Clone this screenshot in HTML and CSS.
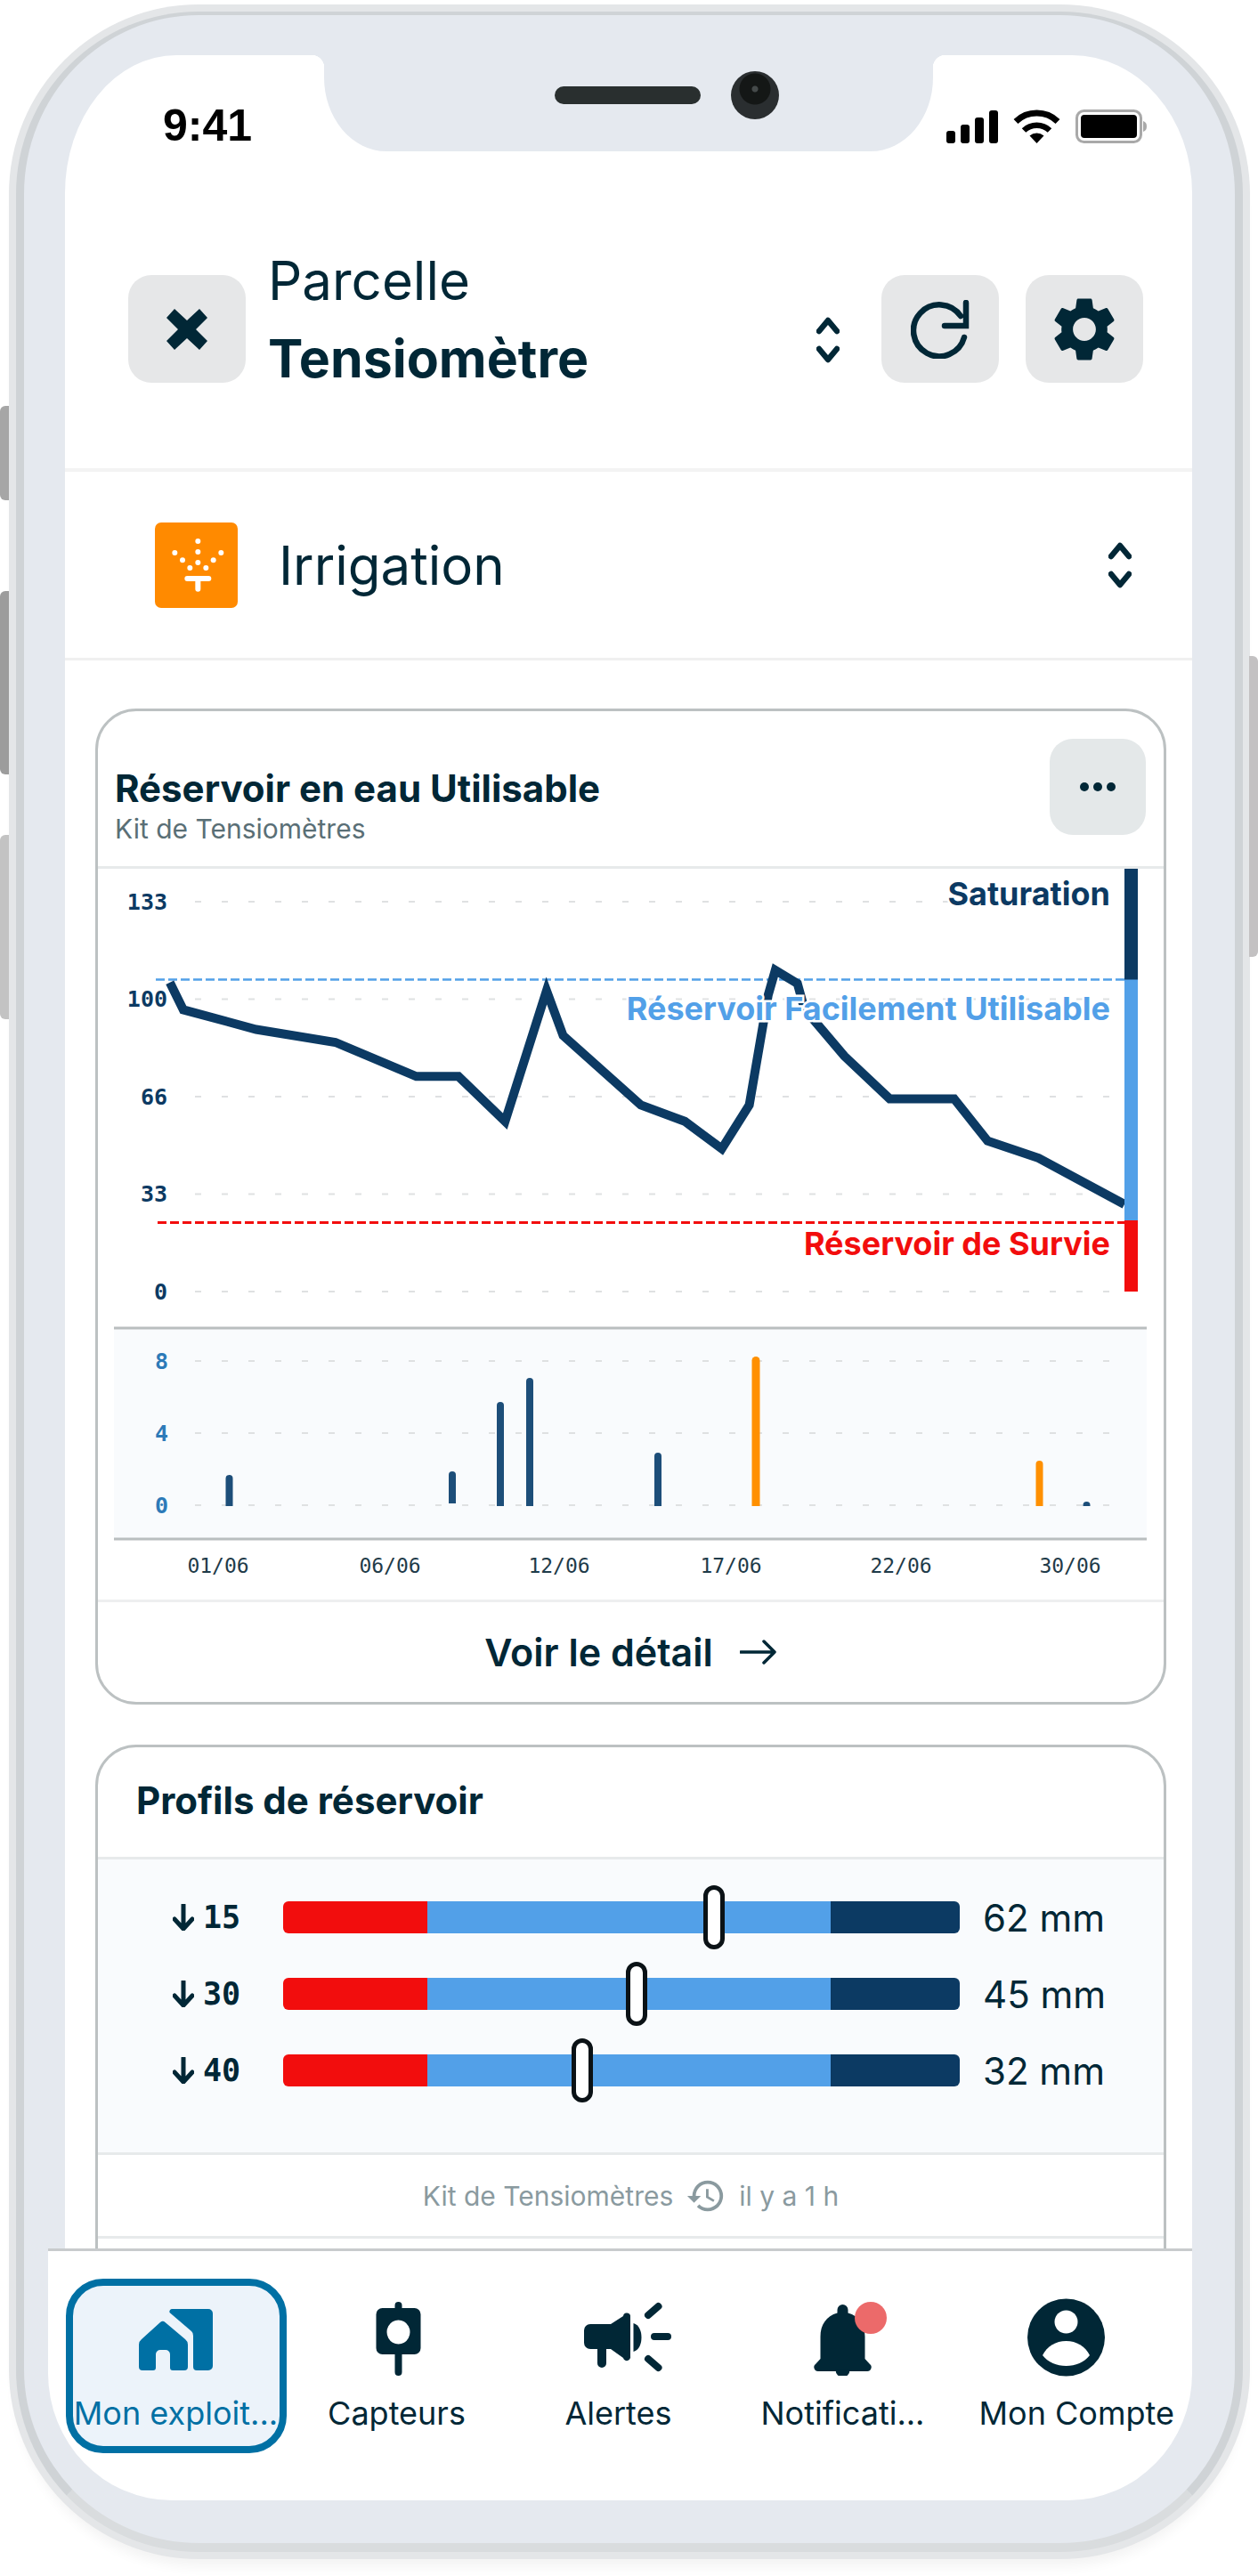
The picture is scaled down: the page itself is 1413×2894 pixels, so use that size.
FILE: index.html
```html
<!DOCTYPE html>
<html>
<head>
    <title>Tensiomètre</title>
    <link rel="stylesheet" href="styles.css">
</head>
<body>
    <div class="phone">
        <div class="side-btn side-a"></div>
        <div class="side-btn side-b"></div>
        <div class="side-btn side-c"></div>
        <div class="side-btn side-d"></div>

        <div class="screen">
            <div class="notch">
                <div class="speaker"></div>
                <div class="camera"></div>
            </div>

            <div class="status">
                <span class="clock">9:41</span>
                <div class="status-icons">
                    <svg width="58" height="37" viewBox="0 0 58 37">
                        <rect x="0" y="23" width="10" height="14" rx="3"/>
                        <rect x="16" y="16" width="10" height="21" rx="3"/>
                        <rect x="32" y="8" width="10" height="29" rx="3"/>
                        <rect x="48" y="0" width="10" height="37" rx="3"/>
                    </svg>
                    <svg width="53" height="38" viewBox="0 0 53 38">
                        <path d="M3 13.500A34 34 0 0 1 50 13.500" fill="none" stroke="#000" stroke-width="7"/>
                        <path d="M12 23.500A21 21 0 0 1 41 23.500" fill="none" stroke="#000" stroke-width="6.500"/>
                        <path d="M18.500 29.500A12 12 0 0 1 34.500 29.500L26.500 38z"/>
                    </svg>
                    <svg width="81" height="38" viewBox="0 0 81 38">
                        <rect x="1.500" y="1.500" width="72" height="35" rx="8" fill="none" stroke="#a9a9a9" stroke-width="3"/>
                        <rect x="6" y="6" width="63" height="26" rx="4"/>
                        <path d="M76 13c3 1 4 3 4 6s-1 5-4 6z" fill="#a9a9a9"/>
                    </svg>
                </div>
            </div>

            <div class="head">
                <button class="icon-btn">
                    <svg width="48" height="48" viewBox="0 0 48 48"><path d="M10 1L24 14 38 1 47 11 34 24 47 37 38 47 24 34 10 47 1 37 14 24 1 11z" fill="#012736"/></svg>
                </button>
                <div class="head-text">
                    <div class="head-small">Parcelle</div>
                    <div class="head-big">Tensiomètre</div>
                </div>
                <svg class="chevrons head-chevrons" width="26" height="54" viewBox="0 0 26 54"><path d="M3 17L13 5 23 17M3 37L13 49 23 37"/></svg>
                <button class="icon-btn">
                    <svg width="66" height="66" viewBox="0 0 66 66"><path d="M56 18A29 29 0 1 0 60 42M38 29H62V3" fill="none" stroke="#012736" stroke-width="6.500" stroke-linecap="round"/></svg>
                </button>
                <button class="icon-btn">
                    <svg width="86" height="86" viewBox="0 0 24 24"><path fill="#012736" d="M19.140 12.940c.04-.3.06-.61.06-.94 0-.32-.02-.64-.07-.94l2.030-1.580c.18-.14.23-.41.12-.61l-1.920-3.320c-.12-.22-.37-.29-.59-.22l-2.390.96c-.5-.38-1.030-.7-1.620-.94l-.36-2.540c-.04-.24-.24-.41-.48-.41h-3.840c-.24 0-.43.17-.47.41l-.36 2.540c-.59.24-1.130.57-1.620.94l-2.390-.96c-.22-.08-.47 0-.59.22L2.740 8.870c-.12.21-.08.47.12.61l2.030 1.580c-.05.3-.09.63-.09.94s.02.64.07.94l-2.030 1.580c-.18.14-.23.41-.12.61l1.920 3.320c.12.22.37.29.59.22l2.390-.96c.5.38 1.030.7 1.620.94l.36 2.540c.05.24.24.41.48.41h3.840c.24 0 .44-.17.47-.41l.36-2.540c.59-.24 1.130-.56 1.620-.94l2.390.96c.22.08.47 0 .59-.22l1.920-3.320c.12-.22.07-.47-.12-.61l-2.010-1.580zM12 15.600c-1.980 0-3.600-1.620-3.600-3.600s1.620-3.600 3.600-3.600 3.600 1.620 3.600 3.600-1.620 3.600-3.600 3.600z"/></svg>
                </button>
            </div>

            <div class="crop-row">
                <div class="crop-logo">
                    <svg width="93" height="96" viewBox="0 0 279 288" fill="#fff">
                        <circle cx="145" cy="63" r="9"/><circle cx="145" cy="99" r="9"/><circle cx="145" cy="135" r="9"/>
                        <circle cx="67" cy="102" r="9"/><circle cx="93" cy="127" r="9"/><circle cx="118" cy="153" r="9"/>
                        <circle cx="223" cy="102" r="9"/><circle cx="197" cy="127" r="9"/><circle cx="172" cy="153" r="9"/>
                        <path d="M109 180H181a9 9 0 0 1 0 18H154V224a9 9 0 0 1-18 0V198H109a9 9 0 0 1 0-18z"/>
                    </svg>
                </div>
                <div class="crop-name">Irrigation</div>
                <svg class="chevrons" width="26" height="54" viewBox="0 0 26 54"><path d="M3 17L13 5 23 17M3 37L13 49 23 37"/></svg>
            </div>

            <div class="card card-chart">
                <div class="card-head">
                    <div class="card-text">
                        <div class="card-title">Réservoir en eau Utilisable</div>
                        <div class="card-sub">Kit de Tensiomètres</div>
                    </div>
                    <button class="more-btn">
                        <svg width="40" height="12" viewBox="0 0 40 12" fill="#012736"><circle cx="5" cy="6" r="5"/><circle cx="20" cy="6" r="5"/><circle cx="35" cy="6" r="5"/></svg>
                    </button>
                </div>

                <svg class="chart" width="1197" height="821" viewBox="110 976 1197 821">
                    <!-- reservoir chart -->
                    <g class="grid">
                        <line x1="219" x2="1263" y1="1013" y2="1013"/>
                        <line x1="219" x2="1263" y1="1122.500" y2="1122.500"/>
                        <line x1="219" x2="1263" y1="1232" y2="1232"/>
                        <line x1="219" x2="1263" y1="1341.500" y2="1341.500"/>
                        <line x1="219" x2="1263" y1="1451" y2="1451"/>
                    </g>
                    <g class="axis-left">
                        <text x="188" y="1022">133</text>
                        <text x="188" y="1131">100</text>
                        <text x="188" y="1241">66</text>
                        <text x="188" y="1350">33</text>
                        <text x="188" y="1460">0</text>
                    </g>
                    <line class="limit limit-blue" x1="175" x2="1263" y1="1100.500" y2="1100.500"/>
                    <line class="limit limit-red" x1="177" x2="1263" y1="1373.500" y2="1373.500"/>
                    <polyline class="curve" points="190.800,1103.700 205.900,1134.400 287.700,1156.500 376.700,1171 467.600,1209.300 515,1209.300 567.300,1259.800 613.900,1112.900 632.500,1163.400 719.800,1241.400 769.200,1259.800 810.700,1290.600 841.600,1241.400 862.900,1117.500 870.800,1090 895.700,1105 903.600,1133.500 948.300,1186.300 999.300,1234.500 1071.700,1234.500 1109.300,1281.800 1166.600,1301 1263,1353"/>
                    <rect x="1263" y="976" width="15" height="125" fill="#0c3a63"/>
                    <rect x="1263" y="1100.500" width="15" height="271" fill="#52a0e8"/>
                    <rect x="1263" y="1371" width="15" height="80" fill="#f20d0d"/>
                    <text class="zone zone-navy" x="1247" y="1016.500">Saturation</text>
                    <text class="zone zone-blue" x="1247" y="1146">Réservoir Facilement Utilisable</text>
                    <text class="zone zone-red" x="1247" y="1410">Réservoir de Survie</text>

                    <!-- rain chart -->
                    <rect x="128" y="1493" width="1160" height="235" fill="#f9fbfd"/>
                    <line class="rule" x1="128" x2="1288" y1="1492" y2="1492"/>
                    <line class="rule" x1="128" x2="1288" y1="1729" y2="1729"/>
                    <g class="grid grid-rain">
                        <line x1="219" x2="1262" y1="1529" y2="1529"/>
                        <line x1="219" x2="1262" y1="1610" y2="1610"/>
                        <line x1="219" x2="1262" y1="1691" y2="1691"/>
                    </g>
                    <g class="axis-rain">
                        <text x="189" y="1538">8</text>
                        <text x="189" y="1619">4</text>
                        <text x="189" y="1700">0</text>
                    </g>
                    <g fill="#1d4e79">
                        <path d="M253.500 1692V1661a4 4 0 0 1 8 0V1692z"/>
                        <path d="M504 1689V1657a4 4 0 0 1 8 0V1689z"/>
                        <path d="M558 1692V1579a4 4 0 0 1 8 0V1692z"/>
                        <path d="M591 1692V1552a4 4 0 0 1 8 0V1692z"/>
                        <path d="M735 1692V1636a4 4 0 0 1 8 0V1692z"/>
                        <path d="M1216.500 1692V1691a4 4 0 0 1 8 0V1692z"/>
                    </g>
                    <g fill="#ff9000">
                        <path d="M844.500 1692V1528.500a4.500 4.500 0 0 1 9 0V1692z"/>
                        <path d="M1163.500 1692V1645a4 4 0 0 1 8 0V1692z"/>
                    </g>
                    <g class="axis-dates">
                        <text x="245" y="1767">01/06</text>
                        <text x="438" y="1767">06/06</text>
                        <text x="628" y="1767">12/06</text>
                        <text x="821" y="1767">17/06</text>
                        <text x="1012" y="1767">22/06</text>
                        <text x="1202" y="1767">30/06</text>
                    </g>
                </svg>

                <div class="card-link">
                    <span>Voir le détail</span>
                    <svg width="42" height="28" viewBox="0 0 42 28"><path d="M1 14H39M27 2L39 14 27 26" fill="none" stroke="#012736" stroke-width="3.500" stroke-linecap="round" stroke-linejoin="round"/></svg>
                </div>
            </div>

            <div class="card card-profiles">
                <div class="profiles-head">Profils de réservoir</div>
                <div class="profiles">
                    <div class="profile-row">
                        <div class="depth">
                            <svg width="24" height="30" viewBox="0 0 24 30"><path d="M12 1V27M2 17L12 28 22 17" fill="none" stroke="#012736" stroke-width="5" stroke-linecap="round"/></svg>
                            <span>15</span>
                        </div>
                        <div class="gauge">
                            <div class="seg-red"></div><div class="seg-blue"></div><div class="seg-navy"></div>
                            <div class="handle" style="left: 63.65%"></div>
                        </div>
                        <div class="mm">62 mm</div>
                    </div>
                    <div class="profile-row">
                        <div class="depth">
                            <svg width="24" height="30" viewBox="0 0 24 30"><path d="M12 1V27M2 17L12 28 22 17" fill="none" stroke="#012736" stroke-width="5" stroke-linecap="round"/></svg>
                            <span>30</span>
                        </div>
                        <div class="gauge">
                            <div class="seg-red"></div><div class="seg-blue"></div><div class="seg-navy"></div>
                            <div class="handle" style="left: 52.2%"></div>
                        </div>
                        <div class="mm">45 mm</div>
                    </div>
                    <div class="profile-row">
                        <div class="depth">
                            <svg width="24" height="30" viewBox="0 0 24 30"><path d="M12 1V27M2 17L12 28 22 17" fill="none" stroke="#012736" stroke-width="5" stroke-linecap="round"/></svg>
                            <span>40</span>
                        </div>
                        <div class="gauge">
                            <div class="seg-red"></div><div class="seg-blue"></div><div class="seg-navy"></div>
                            <div class="handle" style="left: 44.2%"></div>
                        </div>
                        <div class="mm">32 mm</div>
                    </div>
                </div>
                <div class="profiles-foot">
                    <span>Kit de Tensiomètres</span>
                    <svg width="46" height="46" viewBox="0 0 24 24"><path fill="#8a9a9f" d="M13 3a9 9 0 0 0-9 9H1l3.890 3.890.07.14L9 12H6c0-3.870 3.130-7 7-7s7 3.130 7 7-3.130 7-7 7c-1.930 0-3.680-.79-4.940-2.060l-1.420 1.420A8.954 8.954 0 0 0 13 21a9 9 0 0 0 0-18zm-1 5v5l4.280 2.540.72-1.210-3.500-2.080V8H12z"/></svg>
                    <span>il y a 1 h</span>
                </div>
            </div>
        </div>

        <div class="nav">
            <div class="nav-item active">
                <div class="nav-icon">
                    <svg width="91" height="74" viewBox="152 2590 91 74" fill="#0070a4">
                        <path d="M190.500 2598a3 3 0 0 1 3-4H234a5 5 0 0 1 5 5V2658a5 5 0 0 1-5 5H221a4 4 0 0 1-4-4V2624a6 6 0 0 0-2-5z"/>
                        <path d="M180 2609a4 4 0 0 1 5.500 0L208 2628a8 8 0 0 1 3 6V2659a4 4 0 0 1-4 4H194a3 3 0 0 1-3-3V2645a5 5 0 0 0-5-5H180a5 5 0 0 0-5 5V2660a3 3 0 0 1-3 3H160a4 4 0 0 1-4-4V2634a8 8 0 0 1 3-6z"/>
                    </svg>
                </div>
                <div class="nav-label">Mon exploit...</div>
            </div>
            <div class="nav-item">
                <div class="nav-icon">
                    <svg width="54" height="88" viewBox="418.500 2583 54 88" fill="#012736">
                        <path d="M443 2590a4 4 0 0 1 8 0V2593H465a7 7 0 0 1 7 7V2638a7 7 0 0 1-7 7H451V2665a4 4 0 0 1-8 0V2645H429a7 7 0 0 1-7-7V2600a7 7 0 0 1 7-7H443zM447 2606.500a13 13.500 0 1 0 .01 0z" fill-rule="evenodd"/>
                    </svg>
                </div>
                <div class="nav-label">Capteurs</div>
            </div>
            <div class="nav-item">
                <div class="nav-icon">
                    <svg width="121" height="84" viewBox="634 2585 121 84" fill="#012736">
                        <path d="M663 2611H686L700 2602a4 4 0 0 1 8 1V2647a4 4 0 0 1-8 2L686 2639H681V2655a5 5 0 0 1-10 0V2639H663a7 7 0 0 1-7-7V2618a7 7 0 0 1 7-7z"/>
                        <path d="M711.500 2610C718 2612 720.500 2619 720.500 2626S718 2640 711.500 2642z"/>
                        <path d="M728 2601L739.500 2591M735 2625H750M728 2650L739.500 2660" fill="none" stroke="#012736" stroke-width="8" stroke-linecap="round"/>
                    </svg>
                </div>
                <div class="nav-label">Alertes</div>
            </div>
            <div class="nav-item">
                <div class="nav-icon">
                    <svg width="101" height="84" viewBox="899 2585 101 84" fill="#012736">
                        <path d="M949.500 2589a6 6 0 0 1 6 6V2598.500C968 2602 974.500 2612 974.500 2625V2650L980 2656a4.500 4.500 0 0 1-3 8H922a4.500 4.500 0 0 1-3-8L924.500 2650V2625C924.500 2612 931 2602 943.500 2598.500V2595a6 6 0 0 1 6-6z"/>
                        <path d="M941.500 2662.500H957.500a8 8 0 0 1-16 0z"/>
                        <circle cx="981" cy="2604" r="18" fill="#ec6a6a"/>
                    </svg>
                </div>
                <div class="nav-label">Notificati...</div>
            </div>
            <div class="nav-item nav-account">
                <div class="nav-icon">
                    <svg width="117" height="94" viewBox="1155 2580 117 94">
                        <circle cx="1201.500" cy="2626" r="43.500" fill="#012736"/>
                        <circle cx="1201.500" cy="2608.500" r="13" fill="#fff"/>
                        <path d="M1175 2646C1180 2636 1190 2630 1201.500 2630S1223 2636 1228 2646C1222 2654 1212 2658 1201.500 2658S1181 2654 1175 2646z" fill="#fff"/>
                    </svg>
                </div>
                <div class="nav-label">Mon Compte</div>
            </div>
        </div>
    </div>
</body>
</html>
```

FILE: styles.css
```css
* {
    box-sizing: border-box;
}

html, body {
    margin: 0;
    background: #fff;
}

body {
    height: 2894px;
    overflow: hidden;
    font-family: Inter, "Liberation Sans", sans-serif;
    color: #012736;
}

button {
    border: none;
    padding: 0;
    font: inherit;
}

.phone {
    position: relative;
    width: 1378px;
    height: 2854px;
    margin: 13px 0 0 18px;
    padding: 45px 48px 48px 46px;
    display: flex;
    flex-direction: column;
    background: #e5e9ef;
    border-style: solid;
    border-width: 4px 9px 10px;
    border-color: #cfd3d6 #cfd3d6 #d9dcde;
    border-radius: 205px;
    box-shadow: 0 0 0 8px #e4e6e8, 0 16px 14px rgba(0,0,0,0.05);
}

.side-btn {
    position: absolute;
    width: 10px;
    left: -27px;
    border-radius: 6px 0 0 6px;
}

.side-a {
    top: 439px;
    height: 106px;
    background: #a6a6a6;
}

.side-b {
    top: 647px;
    height: 206px;
    background: #9c9c9c;
}

.side-c {
    top: 921px;
    height: 207px;
    background: #c3c3c3;
}

.side-d {
    top: 720px;
    height: 338px;
    left: auto;
    right: -26px;
    border-radius: 0 6px 6px 0;
    background: #c3c1c2;
}

.screen {
    position: relative;
    height: 2464px;
    flex: none;
    overflow: hidden;
    background: #fff;
    border-radius: 125px 135px 0 0 / 155px 155px 0 0;
}

.notch {
    position: absolute;
    top: 0;
    left: 291px;
    width: 684px;
    height: 108px;
    padding: 18px 0 0 259px;
    display: flex;
    align-items: flex-start;
    gap: 34px;
    background: #e5e9ef;
    border-radius: 0 0 70px 70px / 0 0 83px 83px;
}

.notch::before,
.notch::after {
    content: "";
    position: absolute;
    top: 0;
    width: 14px;
    height: 14px;
}

.notch::before {
    left: -14px;
    background: radial-gradient(circle at 0 100%, transparent 14px, #e5e9ef 14.5px);
}

.notch::after {
    right: -14px;
    background: radial-gradient(circle at 100% 100%, transparent 14px, #e5e9ef 14.5px);
}

.speaker {
    width: 164px;
    height: 20px;
    margin-top: 17px;
    border-radius: 10px;
    background: #292f2f;
}

.camera {
    width: 54px;
    height: 54px;
    border-radius: 50%;
    background: radial-gradient(circle at 50% 37%, #454a4a 0, #454a4a 3px, #141716 4px, #141716 17px, #2a2e30 18px);
}

.status {
    height: 110px;
    padding: 61px 50px 0 110px;
    display: flex;
    justify-content: space-between;
    align-items: flex-start;
}

.clock {
    font-family: "Liberation Sans", Arial, sans-serif;
    font-size: 50px;
    line-height: 36px;
    font-weight: 700;
    color: #000;
}

.status-icons {
    display: flex;
    gap: 17px;
    align-items: center;
}

.head {
    height: 121px;
    margin-top: 137px;
    padding: 0 55px 0 71px;
    display: flex;
    align-items: center;
}

.icon-btn {
    width: 132px;
    height: 121px;
    flex: none;
    display: flex;
    align-items: center;
    justify-content: center;
    background: #e6e7e8;
    border-radius: 26px;
}

.head .icon-btn:last-child {
    margin-left: 30px;
}

.head-text {
    flex: 1;
    margin: -22px 0 0 25px;
}

.head-small {
    font-size: 60px;
    line-height: 87px;
}

.head-big {
    font-size: 59px;
    line-height: 87px;
    font-weight: 700;
}

.chevrons {
    flex: none;
    fill: none;
    stroke: #012736;
    stroke-width: 6.5;
    stroke-linecap: round;
    stroke-linejoin: round;
}

.head-chevrons {
    margin: 25px 47px 0 0;
}

.crop-row {
    height: 216px;
    margin-top: 96px;
    padding: 0 68px 0 101px;
    display: flex;
    align-items: center;
    border-top: 4px solid #f3f3f3;
    border-bottom: 3px solid #f0f0f0;
}

.crop-logo {
    width: 93px;
    height: 96px;
    background: #ff8a00;
    border-radius: 7px;
}

.crop-logo svg {
    display: block;
}

.crop-name {
    flex: 1;
    margin: 0 0 0 46px;
    font-size: 60px;
    line-height: 72px;
}

.card {
    margin: 54px 29px 0 34px;
    border: 3px solid #bcc1c2;
    border-radius: 46px;
    overflow: hidden;
    background: #fff;
}

.card-chart {
    height: 1119px;
}

.card-head {
    height: 177px;
    padding: 0 20px 0 19px;
    display: flex;
    justify-content: space-between;
    align-items: flex-start;
    border-bottom: 3px solid #e7eaeb;
}

.card-text {
    margin-top: 61px;
}

.card-title {
    font-size: 42px;
    line-height: 52px;
    font-weight: 700;
}

.card-sub {
    font-size: 30px;
    line-height: 38px;
    color: #5a6f76;
}

.more-btn {
    width: 108px;
    height: 108px;
    margin-top: 31px;
    display: flex;
    align-items: center;
    justify-content: center;
    background: #e4e8e9;
    border-radius: 26px;
}

.chart {
    display: block;
}

.grid line {
    stroke: #dfe1e2;
    stroke-width: 2;
    stroke-dasharray: 7 23;
}

.axis-left text,
.axis-rain text,
.axis-dates text {
    font-family: "DejaVu Sans Mono", monospace;
}

.axis-left text {
    font-size: 25px;
    font-weight: 700;
    fill: #0c3a63;
    text-anchor: end;
}

.axis-rain text {
    font-size: 25px;
    font-weight: 700;
    fill: #2d7ab8;
    text-anchor: end;
}

.axis-dates text {
    font-size: 23px;
    fill: #1f3b49;
    text-anchor: middle;
}

.limit {
    stroke-dasharray: 10 4;
}

.limit-blue {
    stroke: #52a0e8;
    stroke-width: 2.5;
}

.limit-red {
    stroke: #f20d0d;
    stroke-width: 3;
}

.rule {
    stroke: #b9bebf;
    stroke-width: 3;
}

.curve {
    fill: none;
    stroke: #0c3a63;
    stroke-width: 10;
    stroke-linejoin: miter;
}

.zone {
    font-size: 36px;
    font-weight: 700;
    text-anchor: end;
    paint-order: stroke;
    stroke: #fff;
    stroke-width: 5px;
}

.zone-navy {
    fill: #0c3a63;
}

.zone-blue {
    fill: #52a0e8;
}

.zone-red {
    fill: #f20d0d;
}

.card-link {
    height: 115px;
    display: flex;
    align-items: center;
    justify-content: center;
    gap: 30px;
    border-top: 3px solid #eeeff0;
    font-size: 43px;
    font-weight: 600;
}

.profiles-head {
    height: 126px;
    padding: 34px 0 0 43px;
    border-bottom: 3px solid #e7eaeb;
    font-size: 42px;
    line-height: 52px;
    font-weight: 700;
}

.card-profiles {
    margin-top: 45px;
    height: 700px;
}

.profiles {
    height: 332px;
    padding: 29px 0 0 84px;
    display: flex;
    flex-direction: column;
    gap: 14px;
    background: #f9fbfd;
    border-bottom: 3px solid #e7eaeb;
}

.profile-row {
    height: 72px;
    display: flex;
    align-items: center;
}

.depth {
    width: 124px;
    display: flex;
    align-items: center;
    gap: 10px;
    font-family: "DejaVu Sans Mono", monospace;
    font-size: 35px;
    font-weight: 700;
}

.gauge {
    position: relative;
    width: 760px;
    height: 36px;
    display: flex;
    border-radius: 6px;
}

.seg-red {
    width: 162px;
    background: #f20d0d;
    border-radius: 6px 0 0 6px;
}

.seg-blue {
    width: 453px;
    background: #52a0e8;
}

.seg-navy {
    width: 145px;
    background: #0c3a63;
    border-radius: 0 6px 6px 0;
}

.handle {
    position: absolute;
    top: -18px;
    width: 24px;
    height: 72px;
    margin-left: -12px;
    background: #fff;
    border: 5px solid #0b1216;
    border-radius: 12px;
}

.mm {
    margin-left: 26px;
    font-size: 42px;
    white-space: nowrap;
}

.profiles-foot {
    height: 94px;
    display: flex;
    align-items: center;
    justify-content: center;
    gap: 14px;
    border-bottom: 3px solid #e7eaeb;
    font-size: 30px;
    color: #8a9a9f;
}

.nav {
    flex: none;
    height: 283px;
    margin-left: -19px;
    padding: 31px 0 0 19.5px;
    display: grid;
    grid-template-columns: 248px 248px 250px 254px 265.5px;
    align-items: start;
    background: #fff;
    border-top: 3px solid #c8cbcd;
    border-radius: 0 0 139px 139px / 0 0 143px 143px;
}

.nav-item {
    height: 196px;
    padding-top: 8px;
    display: flex;
    flex-direction: column;
    align-items: center;
    border: 8px solid transparent;
    border-radius: 42px;
    white-space: nowrap;
}

.nav-item.active {
    color: #0070a4;
    border-color: #0070a4;
    background: #ecf3fa;
}

.nav-icon {
    height: 102px;
    display: flex;
    align-items: center;
    justify-content: center;
}

.nav-label {
    margin-top: 11px;
    font-size: 36px;
    line-height: 44px;
}

.nav-account {
    padding-left: 6px;
}
```
